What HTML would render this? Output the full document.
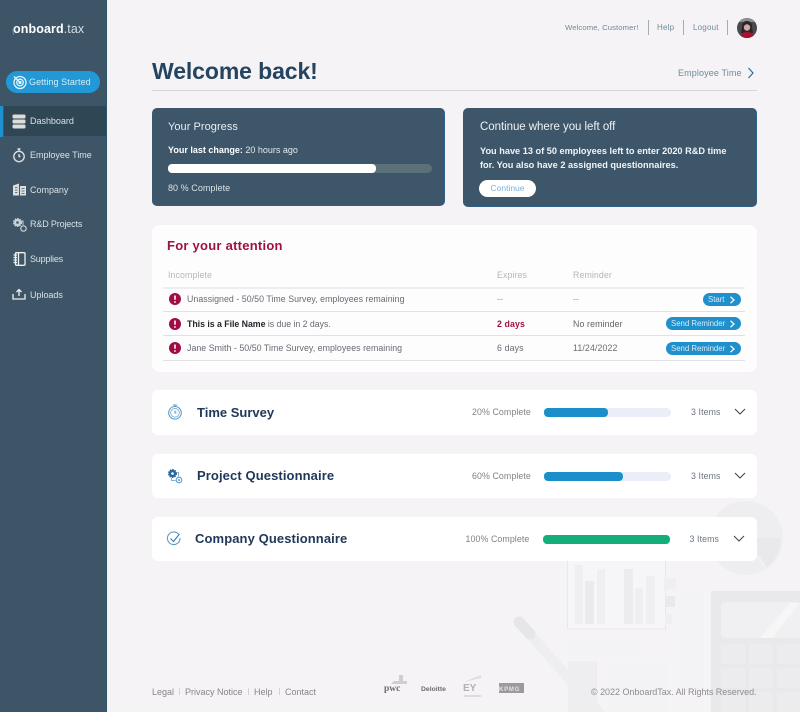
<!DOCTYPE html>
<html lang="en">
<head>
<meta charset="utf-8">
<title>Onboard.tax Dashboard</title>
<style>
*{box-sizing:border-box;margin:0;padding:0}
html,body{width:800px;height:712px;overflow:hidden;background:#f5f3f6;font-family:"Liberation Sans",sans-serif}
#p{position:relative;width:800px;height:712px;overflow:hidden;background:#f5f3f6;filter:blur(.35px)}
.t{position:absolute;white-space:nowrap;line-height:12px;transform:translateY(-6px)}
.b{position:absolute}
svg{position:absolute;overflow:visible}
.nav{color:#d9e1e6;font-size:9px;left:30px;letter-spacing:-.02px}
.card{background:#3d5669;border-radius:5px;border-bottom:1px solid #2d5f86;border-right:1px solid #2d5f86}
.acc{left:152px;width:605px;background:#fff;border-radius:6px}
.hd{font-size:8.8px;color:#b6b6bc;letter-spacing:.1px}
.row{font-size:8.8px;color:#6a6a72;letter-spacing:.04px}
.ln{position:absolute;left:163px;width:582px;height:1px;background:#dfe1e5}
.btn{position:absolute;background:#1f90cc;border-radius:7px;height:13px;color:#dcecf6;font-size:7.800px;line-height:13px;padding-left:5px;white-space:nowrap}
.ttl{font-size:13px;font-weight:bold;color:#20395a;letter-spacing:.1px}
.pc{font-size:8.8px;color:#808086;letter-spacing:.1px}
.it{font-size:8.8px;color:#6d7480;letter-spacing:.1px}
.track{position:absolute;height:9px;border-radius:5px;background:#e9eef8}
.fill{position:absolute;height:9px;border-radius:4px;background:#1c8fca}
.ft{font-size:9px;color:#85858c;letter-spacing:0}
.sep{position:absolute;width:1px;background:#a3acb2;top:20px;height:15px}
</style>
</head>
<body>
<div id="p">

<svg style="left:0;top:0" width="800" height="712" viewBox="0 0 800 712">
  <circle cx="746" cy="538" r="37" fill="#eeeef0"/>
  <path d="M746 538L780 538A34 34 0 0 1 766 568z" fill="#e9e9eb"/>
  <path d="M746 538L766 568" stroke="#f3f3f5" stroke-width="1.500"/>
  <rect x="567.500" y="560" width="98" height="69" fill="#f6f5f7" stroke="#e8e8ea"/>
  <g fill="#efeef1">
    <rect x="575" y="565" width="8" height="59"/><rect x="585" y="581" width="9" height="43" fill="#ebebed"/>
    <rect x="597" y="569" width="8" height="55"/><rect x="624" y="569" width="9" height="55" fill="#ececee"/>
    <rect x="635" y="588" width="8" height="36"/><rect x="646" y="576" width="9" height="48"/>
    <rect x="664" y="578" width="12" height="11"/><rect x="665" y="596" width="10" height="11" fill="#e9e9eb"/>
    <rect x="665" y="614" width="7" height="10"/>
  </g>
  <g fill="#f3f2f5">
    <rect x="568" y="640" width="72" height="16"/><rect x="568" y="661" width="29" height="51" fill="#eeeef0"/>
    <rect x="608" y="662" width="60" height="50"/><rect x="680" y="590" width="24" height="100"/>
  </g>
  <path d="M519 622L602 716" stroke="#eeeef0" stroke-width="10" stroke-linecap="round"/>
  <path d="M519 622L530 634" stroke="#e6e6e8" stroke-width="11" stroke-linecap="round"/>
  <rect x="711" y="591" width="89" height="121" fill="#e9e9eb"/>
  <rect x="721" y="602" width="79" height="36" rx="3" fill="#f0f0f2"/>
  <path d="M760 638L790 603h10L772 638z" fill="#f6f6f7"/>
  <g fill="#ececee">
    <rect x="721" y="644" width="24" height="20"/><rect x="749" y="644" width="24" height="20"/><rect x="777" y="644" width="23" height="20"/>
    <rect x="721" y="668" width="24" height="20"/><rect x="749" y="668" width="24" height="20"/><rect x="777" y="668" width="23" height="20"/>
    <rect x="721" y="692" width="24" height="20"/><rect x="749" y="692" width="24" height="20"/><rect x="777" y="692" width="23" height="20"/>
  </g>
</svg>

<div class="b" style="left:0;top:0;width:107px;height:712px;background:#3d5566;border-right:1px solid #2a5868"></div>
<div class="t" style="left:13px;top:29px;font-size:12.500px;color:#fff;font-weight:bold;letter-spacing:.1px">onboard<span style="font-weight:normal;color:#d5dde2">.tax</span></div>
<svg style="left:11px;top:26px" width="6" height="10"><path d="M3 1Q1 5 3 9" fill="none" stroke="#2c9ad8" stroke-width="1"/></svg>

<div class="b" style="left:6px;top:71px;width:94px;height:22px;border-radius:11px;background:#2299d6"></div>
<svg style="left:12px;top:74px" width="16" height="16" viewBox="0 0 16 16" fill="none" stroke="#e8f3fa" stroke-width="1.300"><circle cx="8" cy="8.500" r="6"/><circle cx="8" cy="8.500" r="3.300"/><circle cx="8" cy="8.500" r="1" fill="#e8f3fa"/><path d="M8 8.500L2 2.500"/></svg>
<div class="t" style="left:29px;top:82px;font-size:9px;color:#d6ebf8;letter-spacing:.08px">Getting Started</div>

<div class="b" style="left:0;top:106px;width:3px;height:31px;background:#2091cf"></div>
<div class="b" style="left:4px;top:106px;width:102px;height:30px;background:#2f4655"></div>
<svg style="left:12px;top:114px" width="14" height="15" viewBox="0 0 14 15" fill="#dcdcd8"><rect x="0.500" y="0.500" width="13" height="4" rx="1.200"/><rect x="0.500" y="5.500" width="13" height="4" rx="1.200"/><rect x="0.500" y="10.500" width="13" height="4" rx="1.200"/></svg>
<div class="t nav" style="top:121px">Dashboard</div>

<svg style="left:12px;top:148px" width="14" height="15" viewBox="0 0 14 15" fill="none" stroke="#dcdfe0" stroke-width="1.400"><circle cx="7" cy="8.500" r="5.200"/><path d="M5.500 1h3M7 1v2M7 6v2.500h1.500" /></svg>
<div class="t nav" style="top:155px">Employee Time</div>

<svg style="left:13px;top:183px" width="13" height="13" viewBox="0 0 13 13" fill="#dcdfe0"><path d="M0 2.500L6 .5v12H0zM7 3h6v9.500H7z"/><path d="M2 4.500h2.500M2 7h2.500M2 9.500h2.500M8.500 5.500h3M8.500 8h3M8.500 10.500h3" stroke="#3e5768" stroke-width=".8"/></svg>
<div class="t nav" style="top:190px">Company</div>

<svg style="left:12px;top:217px" width="15" height="15" viewBox="0 0 15 15"><circle cx="5.500" cy="5.500" r="3.800" fill="#c9d0d4" stroke="#c9d0d4" stroke-width="1.500" stroke-dasharray="1.500 1"/><circle cx="5.500" cy="5.500" r="1.300" fill="#3e5768"/><circle cx="11.500" cy="11.500" r="2.700" fill="none" stroke="#c9d0d4" stroke-width="1.200"/><path d="M9 4h2v4" fill="none" stroke="#c9d0d4"/></svg>
<div class="t nav" style="top:224px;letter-spacing:-.15px">R&amp;D Projects</div>

<svg style="left:13px;top:252px" width="13" height="14" viewBox="0 0 13 14" fill="none" stroke="#eef1f2" stroke-width="1.300"><rect x="2.500" y="0.700" width="9.500" height="12.600" rx="1"/><path d="M5.500 1v12M.5 3h3.500M.5 5.500h3.500M.5 8h3.500M.5 10.500h3.500"/></svg>
<div class="t nav" style="top:259px;letter-spacing:-.2px">Supplies</div>

<svg style="left:12px;top:288px" width="14" height="12" viewBox="0 0 14 12" fill="none" stroke="#eef1f2" stroke-width="1.300"><path d="M1 6v5h12V6M7 8V1.500M4.500 4L7 1.500 9.500 4"/></svg>
<div class="t nav" style="top:295px">Uploads</div>

<div class="t" style="left:565px;top:27.500px;font-size:7.700px;color:#6f8b99;letter-spacing:.1px">Welcome, Customer!</div>
<div class="sep" style="left:648px"></div>
<div class="t" style="left:657px;top:27.500px;font-size:8px;color:#6f8b99;letter-spacing:.2px">Help</div>
<div class="sep" style="left:683px"></div>
<div class="t" style="left:693px;top:27.500px;font-size:8px;color:#6f8b99;letter-spacing:.2px">Logout</div>
<div class="sep" style="left:727px"></div>
<svg style="left:737px;top:18px" width="20" height="20" viewBox="0 0 20 20"><defs><clipPath id="av"><circle cx="10" cy="10" r="10"/></clipPath></defs><g clip-path="url(#av)"><rect width="20" height="20" fill="#4a4a4e"/><rect x="0" y="0" width="20" height="4" fill="#8b8f92"/><path d="M5 9Q5 3 10 3t5 6l1 6H4z" fill="#2c2528"/><circle cx="10" cy="9.500" r="3.200" fill="#cfa9a6"/><path d="M3 20q0-6 7-6t7 6z" fill="#a3142f"/></g></svg>

<div class="t" style="left:152px;top:71px;font-size:23px;line-height:28px;transform:translateY(-14px);font-weight:bold;color:#24445f;letter-spacing:-.1px">Welcome back!</div>
<div class="t" style="left:678px;top:73px;font-size:9px;color:#6f8b99;letter-spacing:.12px">Employee Time</div>
<svg style="left:747px;top:67px" width="8" height="12" viewBox="0 0 8 12"><path d="M1.500 1L6 6l-4.500 5" fill="none" stroke="#2e6a9a" stroke-width="1.200"/></svg>
<div class="b" style="left:152px;top:90px;width:605px;height:1px;background:#d6d5da"></div>

<div class="b card" style="left:152px;top:108px;width:293px;height:98px"></div>
<div class="t" style="left:168px;top:127px;font-size:11px;color:#e9eef1;letter-spacing:.05px">Your Progress</div>
<div class="t" style="left:168px;top:150px;font-size:9px;color:#e4eaee;letter-spacing:0"><b style="color:#fff">Your last change:</b> 20 hours ago</div>
<div class="b" style="left:168px;top:164px;width:264px;height:9px;border-radius:5px;background:#5b7079"></div>
<div class="b" style="left:168px;top:164px;width:208px;height:9px;border-radius:4px;background:#fff"></div>
<div class="t" style="left:168px;top:188px;font-size:9px;color:#d9e1e6;letter-spacing:.05px">80 % Complete</div>

<div class="b card" style="left:463px;top:108px;width:294px;height:99px"></div>
<div class="t" style="left:480px;top:127px;font-size:11.500px;color:#eef2f4;letter-spacing:-.05px">Continue where you left off</div>
<div class="t" style="left:480px;top:151px;font-size:9.200px;font-weight:bold;color:#f1f4f6;letter-spacing:0">You have 13 of 50 employees left to enter 2020 R&amp;D time</div>
<div class="t" style="left:480px;top:164.500px;font-size:9.200px;font-weight:bold;color:#f1f4f6;letter-spacing:0">for. You also have 2 assigned questionnaires.</div>
<div class="b" style="left:479px;top:180px;width:57px;height:17px;border-radius:9px;background:#fff;text-align:center;font-size:8.500px;line-height:17px;color:#7fb0d8">Continue</div>

<div class="b" style="left:152px;top:225px;width:605px;height:147px;border-radius:8px;background:#fdfdfe"></div>
<div class="t" style="left:167px;top:246px;font-size:13px;font-weight:bold;color:#a0103f;letter-spacing:.25px">For your attention</div>
<div class="t hd" style="left:168px;top:275px">Incomplete</div>
<div class="t hd" style="left:497px;top:275px">Expires</div>
<div class="t hd" style="left:573px;top:275px">Reminder</div>
<div class="ln" style="top:287px;height:2px;background:#eeeef0"></div>
<div class="ln" style="top:311px"></div>
<div class="ln" style="top:335px"></div>
<div class="ln" style="top:360px"></div>

<svg style="left:169px;top:293px" width="12" height="12" viewBox="0 0 12 12"><circle cx="6" cy="6" r="6" fill="#a00d45"/><path d="M6 2.500v4.200" stroke="#fff" stroke-width="1.600"/><circle cx="6" cy="9" r=".9" fill="#fff"/></svg>
<div class="t row" style="left:187px;top:299px">Unassigned - 50/50 Time Survey, employees remaining</div>
<div class="t row" style="left:497px;top:299px;color:#999">--</div>
<div class="t row" style="left:573px;top:299px;color:#999">--</div>
<div class="btn" style="left:703px;top:293px;width:38px;padding-left:5px">Start</div>
<svg style="left:729px;top:295.500px" width="7" height="8" viewBox="0 0 7 8"><path d="M1.500 .8L5 4 1.500 7.200" fill="none" stroke="#fff" stroke-width="1.300"/></svg>

<svg style="left:169px;top:318px" width="12" height="12" viewBox="0 0 12 12"><circle cx="6" cy="6" r="6" fill="#a00d45"/><path d="M6 2.500v4.200" stroke="#fff" stroke-width="1.600"/><circle cx="6" cy="9" r=".9" fill="#fff"/></svg>
<div class="t row" style="left:187px;top:323.500px;letter-spacing:-.04px"><b style="color:#26262c">This is a File Name</b> is due in 2 days.</div>
<div class="t row" style="left:497px;top:323.500px;color:#a0103f;font-weight:bold;letter-spacing:.1px">2 days</div>
<div class="t row" style="left:573px;top:323.500px;color:#626268;letter-spacing:.12px">No reminder</div>
<div class="btn" style="left:666px;top:317px;width:75px">Send Reminder</div>
<svg style="left:729px;top:319.500px" width="7" height="8" viewBox="0 0 7 8"><path d="M1.500 .8L5 4 1.500 7.200" fill="none" stroke="#fff" stroke-width="1.300"/></svg>

<svg style="left:169px;top:342px" width="12" height="12" viewBox="0 0 12 12"><circle cx="6" cy="6" r="6" fill="#a00d45"/><path d="M6 2.500v4.200" stroke="#fff" stroke-width="1.600"/><circle cx="6" cy="9" r=".9" fill="#fff"/></svg>
<div class="t row" style="left:187px;top:348px">Jane Smith - 50/50 Time Survey, employees remaining</div>
<div class="t row" style="left:497px;top:348px;letter-spacing:.12px">6 days</div>
<div class="t row" style="left:573px;top:348px;letter-spacing:.12px">11/24/2022</div>
<div class="btn" style="left:666px;top:342px;width:75px">Send Reminder</div>
<svg style="left:729px;top:344.500px" width="7" height="8" viewBox="0 0 7 8"><path d="M1.500 .8L5 4 1.500 7.200" fill="none" stroke="#fff" stroke-width="1.300"/></svg>

<div class="b acc" style="top:390px;height:45px"></div>
<svg style="left:167px;top:404px" width="16" height="16" viewBox="0 0 16 16" fill="none" stroke="#5b9cc9" stroke-width="1.100"><circle cx="8" cy="8.800" r="6.300"/><circle cx="8" cy="8.800" r="4.300" stroke-width=".7"/><path d="M6 1h4M8 1v1.500M8 6.500v2.500h1.500"/></svg>
<div class="t ttl" style="left:197px;top:412.500px;letter-spacing:0">Time Survey</div>
<div class="t pc" style="left:472px;top:412px">20% Complete</div>
<div class="track" style="left:544px;top:408px;width:127px"></div>
<div class="fill" style="left:544px;top:408px;width:64px"></div>
<div class="t it" style="left:691px;top:412px">3 Items</div>
<svg style="left:734px;top:408px" width="12" height="8" viewBox="0 0 12 8"><path d="M1 1l5 5 5-5" fill="none" stroke="#44464c" stroke-width="1.100"/></svg>

<div class="b acc" style="top:454px;height:44px"></div>
<svg style="left:167px;top:468px" width="16" height="16" viewBox="0 0 16 16"><circle cx="5.500" cy="5.500" r="3.800" fill="#2a6a9c" stroke="#2a6a9c" stroke-width="1.500" stroke-dasharray="1.500 1"/><circle cx="5.500" cy="5.500" r="1.300" fill="#fff"/><circle cx="12" cy="12" r="2.800" fill="none" stroke="#5b9cc9" stroke-width="1.100"/><circle cx="12" cy="12" r="1" fill="#5b9cc9"/><path d="M10 4.500h1.500v4M4.500 10v2.500h4" fill="none" stroke="#5b9cc9" stroke-width=".8"/></svg>
<div class="t ttl" style="left:197px;top:476px">Project Questionnaire</div>
<div class="t pc" style="left:472px;top:476px">60% Complete</div>
<div class="track" style="left:544px;top:472px;width:127px"></div>
<div class="fill" style="left:544px;top:472px;width:79px"></div>
<div class="t it" style="left:691px;top:476px">3 Items</div>
<svg style="left:734px;top:472px" width="12" height="8" viewBox="0 0 12 8"><path d="M1 1l5 5 5-5" fill="none" stroke="#44464c" stroke-width="1.100"/></svg>

<div class="b acc" style="top:517px;height:44px"></div>
<svg style="left:166px;top:531px" width="16" height="16" viewBox="0 0 16 16" fill="none" stroke="#5b9cc9" stroke-width="1.100"><path d="M12.500 3.200A6.300 6.300 0 1 0 14 7"/><path d="M4.500 7.500L7.500 10.500 13.500 3" stroke="#3f7fae"/></svg>
<div class="t ttl" style="left:195px;top:539px">Company Questionnaire</div>
<div class="t pc" style="left:465.500px;top:539px">100% Complete</div>
<div class="fill" style="left:543px;top:535px;width:127px;background:#14ad7c"></div>
<div class="t it" style="left:689.500px;top:539px">3 Items</div>
<svg style="left:733px;top:535px" width="12" height="8" viewBox="0 0 12 8"><path d="M1 1l5 5 5-5" fill="none" stroke="#44464c" stroke-width="1.100"/></svg>

<div class="t ft" style="left:152px;top:691.500px">Legal</div>
<div class="b" style="left:179px;top:688px;width:1px;height:7px;background:#d4d4d8"></div>
<div class="t ft" style="left:185px;top:691.500px">Privacy Notice</div>
<div class="b" style="left:248px;top:688px;width:1px;height:7px;background:#d4d4d8"></div>
<div class="t ft" style="left:254px;top:691.500px">Help</div>
<div class="b" style="left:279px;top:688px;width:1px;height:7px;background:#d4d4d8"></div>
<div class="t ft" style="left:285px;top:691.500px">Contact</div>

<div class="t" style="left:384px;top:688.500px;font-family:'Liberation Serif',serif;font-size:9.500px;font-weight:bold;color:#6a6a70">pwc</div>
<svg style="left:391px;top:675px" width="16" height="10" viewBox="0 0 16 10"><path d="M0 9h16V6h-4V0H8v6H3z" fill="#cfcfd2"/></svg>
<div class="t" style="left:421px;top:689.500px;font-size:6.800px;font-weight:bold;color:#6a6a70">Deloitte</div>
<div class="t" style="left:463px;top:688.500px;font-size:10px;font-weight:bold;color:#b0b0b5">EY</div>
<div class="b" style="left:464px;top:695px;width:17px;height:2px;background:#dcdcdf"></div>
<svg style="left:464px;top:674px" width="17" height="8" viewBox="0 0 17 8"><path d="M0 8L17 1v3z" fill="#dedee1"/></svg>
<div class="b" style="left:499px;top:683px;width:25px;height:10px;background:#9a9a9f"></div>
<div class="t" style="left:499px;top:689.500px;font-size:6px;font-weight:bold;color:#e4e4e6;letter-spacing:.8px">KPMG</div>

<div class="t ft" style="left:591px;top:691.500px;color:#8c8c92;letter-spacing:-.03px">© 2022 OnboardTax. All Rights Reserved.</div>
</div>
</body>
</html>
